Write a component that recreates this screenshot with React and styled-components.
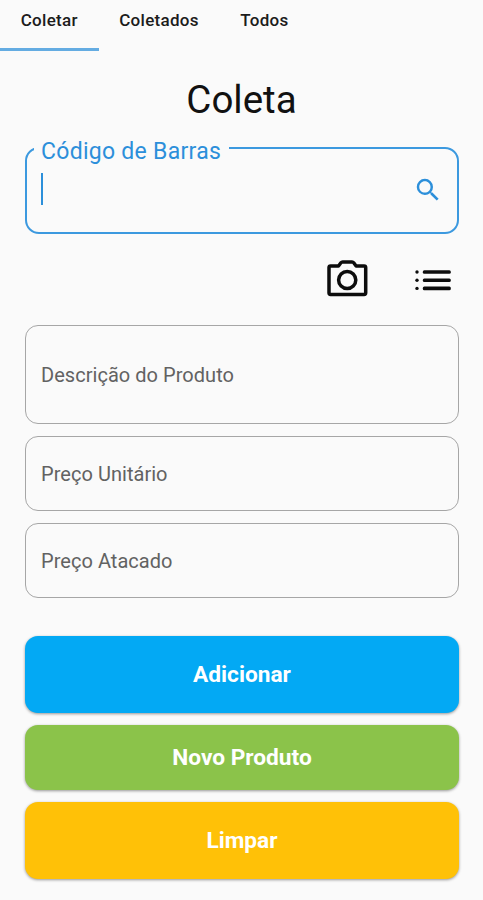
import styled, { createGlobalStyle } from "styled-components";

const tabs = ["Coletar", "Coletados", "Todos"];

const fields = [
  { label: "Descrição do Produto", height: 99 },
  { label: "Preço Unitário", height: 75 },
  { label: "Preço Atacado", height: 75 },
];

const actions = [
  { label: "Adicionar", color: "#03a9f4", height: 77 },
  { label: "Novo Produto", color: "#8bc34a", height: 65 },
  { label: "Limpar", color: "#ffc107", height: 77 },
];

const SearchIcon = () => (
  <svg width="30" height="30" viewBox="0 0 24 24" fill="#2c8fda">
    <path d="M15.5 14h-.79l-.28-.27A6.47 6.47 0 0 0 16 9.5 6.5 6.5 0 1 0 9.5 16c1.61 0 3.09-.59 4.23-1.57l.27.28v.79l5 4.99L20.49 19l-4.99-5zm-6 0C7.01 14 5 11.99 5 9.5S7.01 5 9.5 5 14 7.01 14 9.5 11.99 14 9.5 14z" />
  </svg>
);

const CameraIcon = () => (
  <svg width="41" height="37" viewBox="0 0 41 37" fill="none" stroke="#0c0c0c" strokeWidth="3.5" strokeLinejoin="round">
    <path d="M3.6 6h7.900l2.400-3.200q.7-.9 1.700-.9H25q1 0 1.700.9L29.100 6h8q1.600 0 1.600 1.600v25.200q0 1.600-1.600 1.600H3.600q-1.600 0-1.600-1.600V7.600Q2 6 3.600 6z" />
    <circle cx="20.200" cy="20" r="8.600" />
  </svg>
);

const ListIcon = () => (
  <svg width="37" height="23" viewBox="0 0 37 23" fill="#0c0c0c">
    {[3, 11.2, 19.4].map((y) => (
      <g key={y}>
        <circle cx="2" cy={y} r="1.700" />
        <rect x="7.800" y={y - 1.8} width="28" height="3.600" rx="1.500" />
      </g>
    ))}
  </svg>
);

const App = () => {
  return (
    <>
      <GlobalStyle />
      <Screen>
        <TabBar>
          {tabs.map((tab, i) => (
            <Tab key={tab} $active={i === 0}>
              {tab}
            </Tab>
          ))}
        </TabBar>
        <Title>Coleta</Title>
        <Content>
          <SearchField>
            <SearchLabel>Código de Barras</SearchLabel>
            <SearchRow>
              <Caret />
              <SearchIcon />
            </SearchRow>
          </SearchField>
          <Tools>
            <CameraIcon />
            <ListIcon />
          </Tools>
          <Fields>
            {fields.map((field) => (
              <Field key={field.label} $height={field.height}>
                {field.label}
              </Field>
            ))}
          </Fields>
          <Actions>
            {actions.map((action) => (
              <ActionButton key={action.label} $color={action.color} $height={action.height}>
                {action.label}
              </ActionButton>
            ))}
          </Actions>
        </Content>
      </Screen>
    </>
  );
};

export default App;

const GlobalStyle = createGlobalStyle`
  * {
    box-sizing: border-box;
  }

  body {
    margin: 0;
    background: #fafafa;
    font-family: Roboto, sans-serif;
  }
`;

const Screen = styled.main`
  width: 100%;
  height: 900px;
  overflow: hidden;
  display: flex;
  flex-direction: column;
`;

const TabBar = styled.nav`
  display: flex;
  height: 51px;
`;

const Tab = styled.div`
  padding: 9px 20.7px 0 20.7px;
  font-size: 17px;
  line-height: 22px;
  font-weight: 500;
  letter-spacing: 0.3px;
  color: #1c1c1c;
  border-bottom: 3px solid ${({ $active }) => ($active ? "#64ace2" : "transparent")};
`;

const Title = styled.h1`
  margin: 25px 0 0;
  font-size: 38.5px;
  line-height: 48px;
  font-weight: 400;
  text-align: center;
  color: #111;
`;

const Content = styled.div`
  display: flex;
  flex-direction: column;
  padding: 8px 24px 0 25px;
`;

const SearchField = styled.fieldset`
  height: 102px;
  margin: 0;
  padding: 0 14px 0 14px;
  border: 2px solid #3c99df;
  border-radius: 14px;
`;

const SearchLabel = styled.legend`
  margin-left: -7px;
  padding: 8px 8px 0 7px;
  font-size: 23px;
  line-height: 24px;
  letter-spacing: 0.28px;
  color: #2c8fda;
`;

const SearchRow = styled.div`
  display: flex;
  align-items: center;
  justify-content: space-between;
  height: 32px;
  margin-top: 9px;

  svg {
    margin-top: 2px;
  }
`;

const Caret = styled.span`
  width: 2px;
  height: 32px;
  background: #2c8fda;
`;

const Tools = styled.div`
  display: flex;
  align-items: center;
  justify-content: flex-end;
  gap: 47px;
  height: 37px;
  margin-top: 26px;
  padding-right: 7px;

  svg:last-child {
    margin-top: 3px;
  }
`;

const Fields = styled.div`
  display: flex;
  flex-direction: column;
  gap: 12px;
  margin-top: 28px;
`;

const Field = styled.div`
  display: flex;
  align-items: center;
  height: ${({ $height }) => $height}px;
  padding-left: 15px;
  border: 1px solid #a6a6a6;
  border-radius: 13px;
  font-size: 20px;
  letter-spacing: 0.04px;
  color: #626262;
`;

const Actions = styled.div`
  display: flex;
  flex-direction: column;
  gap: 12px;
  margin-top: 38px;
`;

const ActionButton = styled.button`
  height: ${({ $height }) => $height}px;
  padding: 0 0 1px;
  border: none;
  border-radius: 13px;
  background: ${({ $color }) => $color};
  box-shadow: 0 1px 3px rgba(0, 0, 0, 0.4);
  font-family: inherit;
  font-size: 22.7px;
  font-weight: 700;
  color: #fff;
`;
